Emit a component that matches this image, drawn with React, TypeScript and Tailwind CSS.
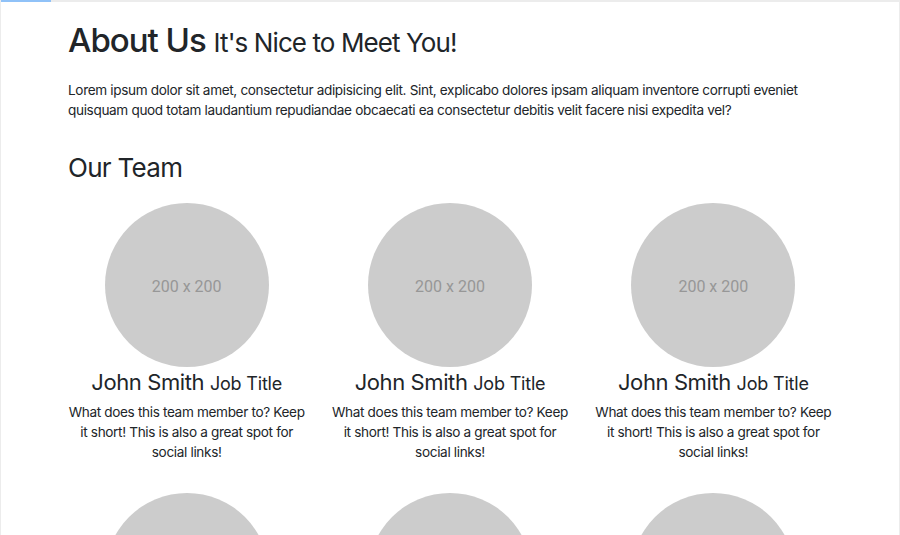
const members = Array.from({ length: 6 }, (_, i) => i);

function Member() {
  return (
    <div className="flex flex-col items-center text-center">
      <div className="flex h-[164px] w-[164px] items-center justify-center rounded-full bg-[#cccccc]">
        <span className="mt-[3px] font-['Roboto',sans-serif] text-[16px] tracking-normal text-[#979797]">200 x 200</span>
      </div>
      <h3 className="mt-0 text-[22px] leading-[30px] tracking-[-0.4px] text-[#212529]">
        John Smith <small className="text-[18px] tracking-[-0.2px]">Job Title</small>
      </h3>
      <p className="mt-[3px] text-[13.6px] leading-[20px] text-[#212529]">
        What does this team member to? Keep it short! This is also a great spot for social links!
      </p>
    </div>
  );
}

export default function App() {
  return (
    <div className="h-[535px] overflow-hidden border-x border-[#ececec] bg-white font-['Inter',sans-serif] tracking-[-0.35px] text-[#212529]">
      <div className="h-[2px] bg-[#ececec]">
        <div className="h-full w-[50px] bg-[#90c2f8]" />
      </div>
      <div className="px-[67px]">
        <h1 className="mt-[18px] text-[33px] leading-[40px] font-medium tracking-[-1px]">
          About Us <small className="text-[26px] font-normal tracking-[-0.9px]">It's Nice to Meet You!</small>
        </h1>
        <p className="mt-[17px] text-[13.6px] leading-[20px]">
          Lorem ipsum dolor sit amet, consectetur adipisicing elit. Sint, explicabo dolores ipsam aliquam inventore
          corrupti eveniet quisquam quod totam laudantium repudiandae obcaecati ea consectetur debitis velit facere nisi
          expedita vel?
        </p>
        <h2 className="mt-[32px] text-[26px] leading-[32px] tracking-[-0.7px]">Our Team</h2>
        <div className="mt-[19px] grid grid-cols-3 gap-x-[26px] gap-y-[31px]">
          {members.map((m) => (
            <Member key={m} />
          ))}
        </div>
      </div>
    </div>
  );
}
